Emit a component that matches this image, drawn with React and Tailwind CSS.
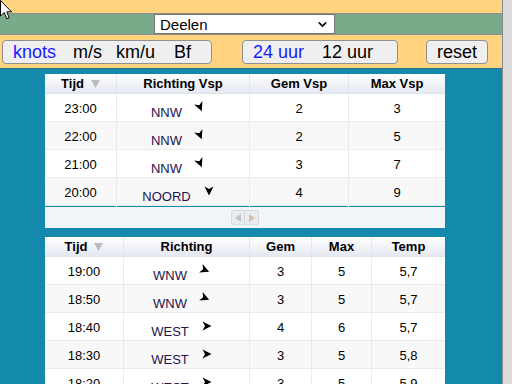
import { ChevronDown } from "lucide-react";

const font = "font-['Liberation_Sans',Arial,sans-serif]";

const rows1 = [
  { t: "23:00", dir: "NNW", rot: 67.5, gem: "2", max: "3" },
  { t: "22:00", dir: "NNW", rot: 67.5, gem: "2", max: "5" },
  { t: "21:00", dir: "NNW", rot: 67.5, gem: "3", max: "7" },
  { t: "20:00", dir: "NOORD", rot: 90, gem: "4", max: "9" },
];

const rows2 = [
  { t: "19:00", dir: "WNW", rot: 22.5, gem: "3", max: "5", temp: "5,7" },
  { t: "18:50", dir: "WNW", rot: 22.5, gem: "3", max: "5", temp: "5,7" },
  { t: "18:40", dir: "WEST", rot: 0, gem: "4", max: "6", temp: "5,7" },
  { t: "18:30", dir: "WEST", rot: 0, gem: "3", max: "5", temp: "5,8" },
  { t: "18:20", dir: "WEST", rot: 0, gem: "3", max: "5", temp: "5,9" },
];

// wind pijltje, wijst waar de wind heen gaat
function Arrow({ rot }) {
  return (
    <svg width="10" height="10" viewBox="0 0 10 10" className="mb-[3px]" style={{ transform: `rotate(${rot}deg)` }}>
      <path d="M0.5 0.5 L9.5 5 L0.5 9.5 L3 5 Z" fill="#000" />
    </svg>
  );
}

function Dir({ dir, rot }) {
  return (
    <div className="flex items-center justify-center pr-[10px] border-r border-[#ebebeb]">
      <span className="mt-[9px] text-[13px] text-[#22124e]">{dir}</span>
      <span className="ml-[13px]"><Arrow rot={rot} /></span>
    </div>
  );
}

function Cell({ children, last }) {
  return (
    <div className={`flex items-center justify-center text-[13px] text-black ${last ? "" : "border-r border-[#ebebeb]"}`}>
      {children}
    </div>
  );
}

function Head({ children, last }) {
  return (
    <div className={`flex items-center justify-center text-[13px] font-bold text-black ${last ? "" : "border-r border-[#e2e6ee]"}`}>
      {children}
    </div>
  );
}

function SortTijd() {
  return (
    <span className="flex items-center">
      Tijd
      <svg width="9" height="8" viewBox="0 0 9 8" className="ml-[7px]">
        <path d="M0 0 L9 0 L4.5 8 Z" fill="#bdbdbd" />
      </svg>
    </span>
  );
}

export default function App() {
  return (
    <div className={`relative flex w-[512px] h-[384px] overflow-hidden ${font}`}>
      <div className="w-[502px] flex flex-col bg-[#1389ab]">
        {/* Top */}
        <div className="shrink-0 h-[13px] bg-[#ffd37f]" />
        <div className="shrink-0 h-[22px] bg-[#77ab8a] border-y border-[#8c8c8c] flex items-center">
          <div className="ml-[154px] w-[181px] h-[20px] bg-white border border-[#767676] flex items-center justify-between pl-[5px] pr-[5px]">
            <span className="text-[15px] text-black leading-none">Deelen</span>
            <ChevronDown size={13} strokeWidth={3.2} color="#111" />
          </div>
        </div>
        <div className="shrink-0 h-[34px] bg-[#ffd37f] border-b border-[#2d6e85] flex items-start pt-[5px] text-[18px] leading-none">
          <div className="ml-[2px] w-[210px] h-[24px] border border-[#8f8f8f] rounded-[4px] bg-[#efefef] flex items-center pl-[10px]">
            <span className="text-[#1a1aff]">knots</span>
            <span className="ml-[17px] text-black">m/s</span>
            <span className="ml-[14px] text-black">km/u</span>
            <span className="ml-[19px] text-black">Bf</span>
          </div>
          <div className="ml-[30px] w-[156px] h-[24px] border border-[#8f8f8f] rounded-[4px] bg-[#efefef] flex items-center pl-[10px]">
            <span className="text-[#1a1aff]">24 uur</span>
            <span className="ml-[18px] text-black">12 uur</span>
          </div>
          <div className="ml-[28px] w-[62px] h-[24px] border border-[#8f8f8f] rounded-[4px] bg-[#efefef] flex items-center justify-center text-black">
            reset
          </div>
        </div>

        {/* Tabel 1 */}
        <div className="shrink-0 ml-[45px] mt-[5px] w-[400px] bg-white">
          <div className="grid grid-cols-[72px_133px_99px_96px] h-[20px] bg-gradient-to-b from-white to-[#e4e8f1] border-b border-[#dfe3ea]">
            <Head><SortTijd /></Head>
            <Head>Richting Vsp</Head>
            <Head>Gem Vsp</Head>
            <Head last>Max Vsp</Head>
          </div>
          {rows1.map((r, i) => (
            <div key={r.t} className={`grid grid-cols-[72px_133px_99px_96px] h-[28px] border-b border-[#ebebeb] ${i % 2 ? "bg-[#f8f8f8]" : "bg-white"}`}>
              <Cell>{r.t}</Cell>
              <Dir dir={r.dir} rot={r.rot} />
              <Cell>{r.gem}</Cell>
              <Cell last>{r.max}</Cell>
            </div>
          ))}
          <div className="h-[22px] bg-[#f1f4f9] border-t border-[#1389ab] flex items-center justify-center">
            <div className="flex border border-[#d6d9de] rounded-[2px] bg-[#e9ebef]">
              <div className="w-[13px] h-[13px] flex items-center justify-center border-r border-[#d6d9de]">
                <svg width="6" height="8" viewBox="0 0 6 8"><path d="M6 0 L6 8 L0 4 Z" fill="#c4c4c4" /></svg>
              </div>
              <div className="w-[13px] h-[13px] flex items-center justify-center">
                <svg width="6" height="8" viewBox="0 0 6 8"><path d="M0 0 L0 8 L6 4 Z" fill="#d4c2ab" /></svg>
              </div>
            </div>
          </div>
        </div>

        {/* Tabel 2 */}
        <div className="shrink-0 ml-[45px] mt-[9px] w-[400px] bg-white">
          <div className="grid grid-cols-[79px_126px_62px_60px_73px] h-[20px] bg-gradient-to-b from-white to-[#e4e8f1] border-b border-[#dfe3ea]">
            <Head><SortTijd /></Head>
            <Head>Richting</Head>
            <Head>Gem</Head>
            <Head>Max</Head>
            <Head last>Temp</Head>
          </div>
          {rows2.map((r, i) => (
            <div key={r.t} className={`grid grid-cols-[79px_126px_62px_60px_73px] h-[28px] border-b border-[#ebebeb] ${i % 2 ? "bg-[#f8f8f8]" : "bg-white"}`}>
              <Cell>{r.t}</Cell>
              <Dir dir={r.dir} rot={r.rot} />
              <Cell>{r.gem}</Cell>
              <Cell>{r.max}</Cell>
              <Cell last>{r.temp}</Cell>
            </div>
          ))}
        </div>
      </div>
      <div className="w-[10px] shrink-0 bg-[#dcdcdc] border-l border-[#8a8a8a]" />

      {/* muiscursor */}
      <svg width="14" height="21" viewBox="0 0 14 21" className="absolute left-0 top-0">
        <path d="M0.5 0.5 L0.5 16 L4.2 12.5 L6.8 18.8 L9.2 17.8 L6.7 11.8 L11.5 11.8 Z" fill="#fff" stroke="#000" strokeWidth="1" />
      </svg>
    </div>
  );
}
